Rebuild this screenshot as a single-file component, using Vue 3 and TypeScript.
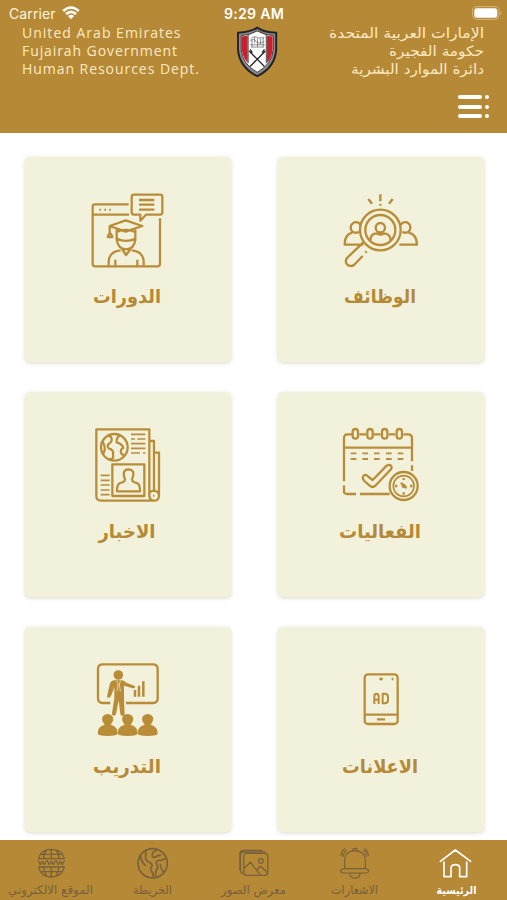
<script setup lang="ts">
interface Label { text: string; width: number }
interface Card extends Label { id: string; box: string }
interface Tab extends Label { id: string; box: string; active?: boolean }

const english: Label[] = [
  { text: 'United Arab Emirates', width: 158.5 },
  { text: 'Fujairah Government', width: 155 },
  { text: 'Human Resources Dept.', width: 177 },
]
const arabic: Label[] = [
  { text: 'الإمارات العربية المتحدة', width: 155 },
  { text: 'حكومة الفجيرة', width: 95 },
  { text: 'دائرة الموارد البشرية', width: 133 },
]
const cards: Card[] = [
  { id: 'courses', text: 'الدورات', width: 68, box: '-6 0 300 285' },
  { id: 'jobs', text: 'الوظائف', width: 72, box: '3 0 300 285' },
  { id: 'news', text: 'الاخبار', width: 57, box: '-6 0 300 285' },
  { id: 'events', text: 'الفعاليات', width: 82, box: '3 0 300 285' },
  { id: 'training', text: 'التدريب', width: 68, box: '-6 0 300 285' },
  { id: 'ads', text: 'الاعلانات', width: 76, box: '3 0 300 285' },
]
const tabs: Tab[] = [
  { id: 'web', text: 'الموقع الالكتروني', width: 85, box: '62 45 180 120' },
  { id: 'map', text: 'الخريطة', width: 39, box: '366 45 180 120' },
  { id: 'gallery', text: 'معرض الصور', width: 65, box: '-88.5 45 180 120' },
  { id: 'alerts', text: 'الاشعارات', width: 47, box: '216 45 180 120' },
  { id: 'home', text: 'الرئيسية', width: 40, box: '520 45 180 120', active: true },
]
const bars = [0, 1, 2]
const rings = [76, 120, 164, 208]
const dashes = [62, 97, 132, 168, 203]
</script>

<template>
  <div class="screen">
    <header class="header">
      <div class="status">
        <div class="carrier">
          <span>Carrier</span>
          <svg class="wifi" viewBox="0 0 18 14">
            <path d="M1.2 5 Q9 -2 16.8 5 M4 8 Q9 3.7 14 8" fill="none" stroke="currentColor" stroke-width="2.5" />
            <path d="M5.9 9.9 Q9 7.5 12.1 9.9 L9 13.3Z" fill="currentColor" />
          </svg>
        </div>
        <span class="time">9:29 AM</span>
        <svg class="battery" viewBox="0 0 32 14">
          <rect x=".6" y=".6" width="26.5" height="12.8" rx="4" fill="none" stroke="#d6b67c" stroke-width="1" />
          <rect x="2.3" y="2.2" width="23" height="9.5" rx="2.5" fill="#fff" />
          <path d="M28.5 5 Q31 7 28.5 9Z" fill="#d6b67c" />
        </svg>
      </div>
      <div class="brand">
        <svg class="en" viewBox="0 0 180 54">
          <text v-for="(l, i) in english" :key="l.text" x="0" :y="14 + i * 18" :textLength="l.width">{{ l.text }}</text>
        </svg>
        <svg class="crest" viewBox="34 22 124 156" preserveAspectRatio="none">
          <path d="M96 24 Q115 38 154 40 V91 Q151 146 96 174 Q41 146 37 91 V40 Q77 38 96 24Z" fill="#8d8b89" stroke="#242326" stroke-width="6" />
          <path d="M96 34 Q119 47 145 49 V92 Q141 137 96 162 Q50 137 47 92 V49 Q74 47 96 34Z" fill="#fff" stroke="#353338" stroke-width="3" />
          <path d="M49 51 L67 49 V133 Q51 115 49 92Z M126 49 L143 51 V92 Q141 115 126 133Z" fill="#c71f2b" />
          <path d="M68 47 V134 M124 47 V134" stroke="#6c696b" stroke-width="4" />
          <path d="M71 96 L118 144 M121 96 L74 144 M74 91 L81 101 M118 91 L111 101" stroke="#29272a" stroke-width="4" />
          <path d="M76 59 Q88 47 99 56 L118 55 M73 67 Q84 55 92 66 T118 66 M74 77 H119 M77 84 H117 M80 60 V84 M88 53 V72 M97 57 V84 M106 58 V76 M114 55 V83" fill="none" stroke="#555" stroke-width="2" />
        </svg>
        <svg class="ar" viewBox="0 0 160 54">
          <text v-for="(l, i) in arabic" :key="l.text" :x="160 - l.width / 2" :y="14 + i * 18" :textLength="l.width" lengthAdjust="spacingAndGlyphs">{{ l.text }}</text>
        </svg>
      </div>
      <button class="menu" aria-label="القائمة">
        <span v-for="b in bars" :key="b" class="menu-row"><i class="bar"></i><i class="dot"></i></span>
      </button>
    </header>

    <main class="grid">
      <section v-for="c in cards" :key="c.id" class="card">
        <svg class="icon" :viewBox="c.box">
          <g v-if="c.id === 'courses'">
            <path d="M146 73 H45 Q38 73 38 80 V251 Q38 259 46 259 H232 Q240 259 240 251 V115 M38 104 H147" />
            <path d="M58 89h5 M73 89h5 M88 89h5" stroke-width="6" />
            <path d="M162 44 H241 Q247 44 247 51 V97 Q247 104 241 104 H198 L181 122 V104 H162 Q155 104 155 97 V51 Q155 44 162 44Z M177 60 H223 M177 74 H223 M177 89 H223" />
            <path d="M137 121 L187 138 L137 155 L89 138Z M89 138 V163 M83 171 Q90 150 97 171Z M110 149 V179 Q114 207 138 208 Q163 207 166 179 V149 M111 176 Q138 189 165 176 M110 156 Q137 143 166 156" />
            <path d="M126 207 L138 225 L152 207 M122 211 Q87 214 86 246 V259 M155 211 Q190 214 191 246 V259 M106 239 V259 M172 239 V259" />
          </g>
          <g v-else-if="c.id === 'jobs'" stroke-width="7">
            <circle cx="151" cy="150" r="61" /><circle cx="151" cy="150" r="45" />
            <circle cx="151" cy="143" r="14" />
            <path d="M121 181 Q122 160 141 160 H162 Q181 161 182 181 M141 160 Q151 168 162 160" />
            <path d="M92 135 Q85 124 73 127 Q57 136 64 151 Q73 163 87 155 M67 158 Q44 163 44 194 H100 M211 135 Q219 124 231 127 Q246 136 239 151 Q231 163 217 155 M236 158 Q260 163 261 194 H208" />
            <path d="M100 187 L51 234 Q44 244 51 253 Q61 262 72 255 L98 228 M106 218 L110 214 M115 57 L126 71 M188 57 L177 71 M151 43 V64 M151 72 V77" />
          </g>
          <g v-else-if="c.id === 'news'">
            <path d="M208 247 V43 H49 V244 Q49 257 64 257 H221 Q237 257 237 242 V113 H224 M208 78 H222 V227 M208 241 Q209 257 222 257 M222 227 Q207 228 207 241 M222 227 Q237 229 237 242" />
            <circle cx="103" cy="97" r="40" />
            <path d="M85 61 Q102 69 91 83 Q77 90 87 101 Q101 103 99 118 Q103 135 87 132 M67 78 Q80 100 70 116 M119 61 Q108 70 110 82 Q127 87 130 99 Q119 103 124 116 L132 121" />
            <path d="M153 58 H196 M153 72 H165 M172 72 H196 M153 86 H196 M153 100 H196 M153 114 H180 M189 114 H196 M62 181 H89 M62 196 H89 M62 210 H89 M62 225 H89 M62 239 H89" stroke-width="5" />
            <path d="M97 148 H193 V243 H97Z" />
            <path d="M135 193 Q124 164 145 163 Q168 164 156 193 Q157 202 171 204 Q181 209 180 229 H111 Q110 209 120 204 Q134 202 135 193Z M219 242h4" />
          </g>
          <g v-else-if="c.id === 'events'">
            <path d="M66 58 H52 Q42 58 42 70 V199 M42 211 V229 Q42 237 51 237 H78 M90 237 H179 M88 58 H108 M132 58 H152 M176 58 H196 M220 58 H235 Q246 58 246 70 V139 M246 151 V168 M42 98 H246" />
            <rect v-for="x in rings" :key="x" :x="x - 8" y="42" width="16" height="29" rx="8" />
            <path v-for="x in dashes" :key="x" :d="`M${x} 115h17 M${x} 132h17`" stroke-width="5.5" />
            <path d="M103 198 Q94 188 102 181 Q109 177 116 186 L128 195 L170 152 Q179 146 184 154 Q187 159 180 166 L136 212 Q128 220 119 212Z" />
            <circle cx="221" cy="213" r="42" /><circle cx="221" cy="213" r="31" stroke-width="5" />
            <path d="M221 189 V195 M221 232 V239 M195 213 H202 M240 213 H247 M213 203 L221 212 L230 219" />
            <circle cx="221" cy="213" r="3" class="solid" />
          </g>
          <g v-else-if="c.id === 'training'">
            <path d="M91 159 H68 Q54 159 54 145 V57 Q54 43 68 43 H219 Q233 43 233 57 V145 Q233 159 219 159 H138" stroke-width="7" />
            <circle cx="115" cy="75" r="11" class="solid" />
            <path class="solid" stroke="none" d="M101 91 H126 Q134 92 139 98 L163 107 Q168 110 164 114 Q161 116 156 114 L132 107 V144 L134 193 Q134 198 128 198 Q122 198 121 192 L116 151 L108 192 Q106 198 100 197 Q95 195 96 190 L103 144 V112 L93 138 Q90 145 84 143 Q79 141 82 134 L90 100 Q93 92 101 91Z" />
            <path d="M109 92 L116 106 L122 92 M114 104 L111 124 M118 104 L121 124" stroke="#f2f1dc" stroke-width="2" />
            <path d="M165 120 V140 M177 107 V140 M190 94 V140" stroke-width="7.5" />
            <g class="solid" stroke="none">
              <path v-for="x in [83, 143, 203]" :key="x" :d="`M${x-9} 224 Q${x-22} 207 ${x-13} 197 Q${x} 187 ${x+13} 197 Q${x+22} 207 ${x+9} 224 Q${x+31} 230 ${x+30} 250 Q${x+30} 258 ${x} 258 Q${x-30} 258 ${x-30} 250 Q${x-31} 230 ${x-9} 224Z`" />
            </g>
          </g>
          <g v-else>
            <rect x="104" y="73" width="99" height="149" rx="10" />
            <path d="M104 194 H203 M141 208 H165 M148 87 H158 M185 87 H190" />
            <path d="M133 162 V139 Q133 131 139 131 Q146 131 146 139 V162 M133 149 H146 M158 131 V160 H164 Q174 160 174 150 V141 Q174 131 164 131Z" stroke-width="6" />
          </g>
        </svg>
        <svg class="title" viewBox="0 0 100 32">
          <text x="49" y="22" text-anchor="middle" :textLength="c.width" lengthAdjust="spacingAndGlyphs">{{ c.text }}</text>
        </svg>
      </section>
    </main>

    <nav class="tabs">
      <a v-for="t in tabs" :key="t.id" class="tab" :class="{ active: t.active }">
        <svg class="tab-icon" :viewBox="t.box">
          <g v-if="t.id === 'web'">
            <path d="M115 101 Q119 74 153 73 Q187 74 192 101 M115 126 Q119 154 153 156 Q187 154 192 126 M153 73 V101 M153 126 V156 M138 75 Q129 87 130 101 M168 75 Q177 87 176 101 M130 126 Q132 145 140 154 M176 126 Q174 145 166 154 M121 88 H185 M121 140 H185 M115 101 H192 M115 126 H192" stroke-width="4" />
            <path d="M114 107 L120 119 L126 109 L132 119 L138 107 M141 107 L147 119 L153 109 L159 119 L165 107 M168 107 L174 119 L180 109 L186 119 L192 107" stroke-width="3.5" />
          </g>
          <g v-else-if="t.id === 'map'">
            <circle cx="458" cy="115" r="44" stroke-width="5" />
            <path d="M437 77 V91 Q435 105 446 111 Q458 116 456 124 Q448 130 455 139 Q461 145 460 158 M421 93 Q424 111 436 121 M470 75 Q454 83 457 94 Q464 101 472 92 L481 91 M498 100 L484 106 Q468 104 469 115 L474 127 Q465 139 467 152 M481 119 Q484 135 490 139" stroke-width="5" />
          </g>
          <g v-else-if="t.id === 'gallery'" stroke-width="3.8">
            <rect x="-26" y="85" width="72" height="66" rx="9" />
            <path d="M-30 146 Q-36 143 -36 135 V89 Q-36 81 -27 81 H38 M-35 139 Q-38 137 -38 130 V87 Q-38 76 -26 76 H28" />
            <circle cx="25" cy="108" r="7" /><path d="M-23 128 L-6 112 L23 149 M12 134 L24 124 L43 141" />
          </g>
          <g v-else-if="t.id === 'alerts'" stroke-width="3.5">
            <path d="M275 131 V103 Q277 78 305 77 Q334 78 337 103 V131 M299 77 Q299 70 306 70 Q313 70 313 77 M275 131 H337 Q347 133 347 138 Q346 144 338 144 H271 Q263 143 263 137 Q264 132 275 131 M291 145 Q291 159 306 160 Q320 158 321 145 M270 94 Q270 84 280 76 M264 91 Q266 77 275 72 M340 94 Q341 83 331 76 M346 91 Q345 78 336 71" />
          </g>
          <g v-else stroke-width="5">
            <path d="M563 109 L608 75 L654 109 M574 111 V155 H595 V129 Q596 119 608 119 Q621 119 621 129 V155 H642 V111" />
          </g>
        </svg>
        <svg class="tab-label" viewBox="0 0 101 20">
          <text x="50.5" y="14" text-anchor="middle" :textLength="t.width" lengthAdjust="spacingAndGlyphs">{{ t.text }}</text>
        </svg>
      </a>
    </nav>
  </div>
</template>

<style>
body { margin: 0; background: #fff; }
</style>

<style scoped>
.screen { width: 507px; height: 900px; display: flex; flex-direction: column; overflow: hidden; background: #fff; font-family: Inter, "DejaVu Sans", sans-serif; }
svg { display: block; overflow: visible; flex: none; }
.header { height: 133px; flex: none; box-sizing: border-box; background: #b58935; color: #fff; display: flex; flex-direction: column; }
.status { height: 24px; flex: none; display: grid; grid-template-columns: 1fr auto 1fr; align-items: center; padding: 3px 8px 0 9px; box-sizing: border-box; font-size: 14px; }
.carrier { display: flex; align-items: center; gap: 6px; color: #fff5df; letter-spacing: .1px; }
.wifi { width: 18px; height: 14px; color: #fff; margin-top: -1px; }
.time { font-weight: 600; font-size: 14.2px; letter-spacing: .25px; }
.battery { width: 32px; height: 14px; justify-self: end; margin-right: -5px; margin-top: -1px; }
.brand { display: flex; align-items: flex-start; padding-left: 21.5px; height: 67px; }
.en { width: 180px; height: 54px; font: 400 14px "Open Sans", sans-serif; fill: #ffe9c2; }
.crest { width: 40.5px; height: 50.5px; margin: 3px 0 0 35.5px; }
.ar { width: 160px; height: 54px; font: 400 14px "DejaVu Sans", sans-serif; fill: #ffe9c2; direction: rtl; text-anchor: middle; margin-left: 46px; }
.menu { align-self: flex-end; margin: 4px 18px 0 0; padding: 0; border: 0; background: none; display: flex; flex-direction: column; gap: 5.5px; }
.menu-row { display: flex; gap: 3px; }
.bar { width: 24px; height: 4px; border-radius: 2px; background: #fff; }
.dot { width: 4px; height: 4px; border-radius: 2px; background: #fff; }
.grid { flex: 1; display: grid; grid-template-columns: 206px 206px; grid-auto-rows: 205px; column-gap: 47px; row-gap: 30px; padding: 24px 0 0 25px; align-content: start; }
.card { background: #f2f1dc; border-radius: 5px; box-shadow: 0 1px 4px rgba(140, 130, 70, .3); display: flex; flex-direction: column; align-items: center; padding-top: 23px; box-sizing: border-box; }
.icon { width: 100px; height: 95px; fill: none; stroke: #b98d38; stroke-width: 6.8; stroke-linejoin: round; }
.solid { fill: #b98d38; }
.title { width: 100px; height: 32px; margin-top: 6px; font: 700 19px "DejaVu Sans", sans-serif; fill: #b58935; direction: rtl; }
.tabs { height: 60px; flex: none; background: #b58935; display: grid; grid-template-columns: repeat(5, 1fr); }
.tab { color: #78613c; display: flex; flex-direction: column; align-items: center; }
.tab.active { color: #fff; }
.tab-icon { width: 60px; height: 40px; fill: none; stroke: currentColor; stroke-linejoin: round; stroke-linecap: round; }
.tab-label { width: 101px; height: 20px; fill: currentColor; font: 400 12px "DejaVu Sans", sans-serif; direction: rtl; }
.tab.active .tab-label { font-weight: 700; font-size: 11px; }
</style>
